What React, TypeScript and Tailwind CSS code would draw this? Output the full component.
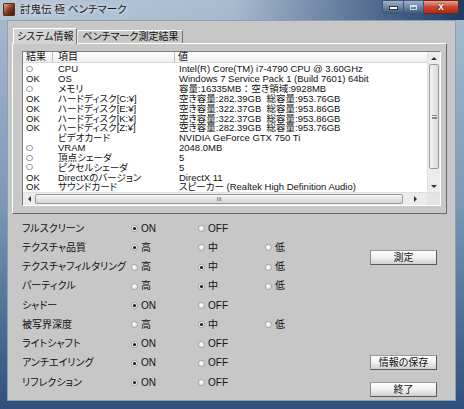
import React from "react";

interface InfoRow {
  result: string;
  item: string;
  value: string;
}

interface SettingRow {
  label: string;
  options: string[];
  selected: number;
}

const infoRows: InfoRow[] = [
  { result: "○", item: "CPU", value: "Intel(R) Core(TM) i7-4790 CPU @ 3.60GHz" },
  { result: "OK", item: "OS", value: "Windows 7 Service Pack 1 (Build 7601) 64bit" },
  { result: "○", item: "メモリ", value: "容量:16335MB ： 空き領域:9928MB" },
  { result: "OK", item: "ハードディスク[C:¥]", value: "空き容量:282.39GB  総容量:953.76GB" },
  { result: "OK", item: "ハードディスク[E:¥]", value: "空き容量:322.37GB  総容量:953.86GB" },
  { result: "OK", item: "ハードディスク[K:¥]", value: "空き容量:322.37GB  総容量:953.86GB" },
  { result: "OK", item: "ハードディスク[Z:¥]", value: "空き容量:282.39GB  総容量:953.76GB" },
  { result: "", item: "ビデオカード", value: "NVIDIA GeForce GTX 750 Ti" },
  { result: "○", item: "VRAM", value: "2048.0MB" },
  { result: "○", item: "頂点シェーダ", value: "5" },
  { result: "○", item: "ピクセルシェーダ", value: "5" },
  { result: "OK", item: "DirectXのバージョン", value: "DirectX 11" },
  { result: "OK", item: "サウンドカード", value: "スピーカー (Realtek High Definition Audio)" },
];

const settings: SettingRow[] = [
  { label: "フルスクリーン", options: ["ON", "OFF"], selected: 0 },
  { label: "テクスチャ品質", options: ["高", "中", "低"], selected: 0 },
  { label: "テクスチャフィルタリング", options: ["高", "中", "低"], selected: 1 },
  { label: "パーティクル", options: ["高", "中", "低"], selected: 1 },
  { label: "シャドー", options: ["ON", "OFF"], selected: 0 },
  { label: "被写界深度", options: ["高", "中", "低"], selected: 1 },
  { label: "ライトシャフト", options: ["ON", "OFF"], selected: 0 },
  { label: "アンチエイリング", options: ["ON", "OFF"], selected: 0 },
  { label: "リフレクション", options: ["ON", "OFF"], selected: 0 },
];

function Radio({ checked, label }: { checked: boolean; label: string }) {
  return (
    <div className="flex items-center gap-[3px]">
      <span className="w-[7px] h-[7px] rounded-full border border-[#a4a4a4] bg-[radial-gradient(circle_at_35%_35%,#ffffff,#dcdcdc)] flex items-center justify-center">
        {checked && <span className="w-[3px] h-[3px] rounded-full bg-[#111]" />}
      </span>
      <span>{label}</span>
    </div>
  );
}

function Btn({ label }: { label: string }) {
  return (
    <div className="w-[67px] h-[15px] border border-[#5a5a5a] border-t-[#9a9a9a] border-l-[#8a8a8a] bg-gradient-to-b from-[#ffffff] via-[#f0f0f0] to-[#d0d0d0] flex items-center justify-center text-[10px] leading-none text-[#111]">
      {label}
    </div>
  );
}

function Arrow({ dir }: { dir: "up" | "down" | "left" | "right" }) {
  const cls = {
    up: "border-l-[3px] border-r-[3px] border-b-[3px] border-l-transparent border-r-transparent border-b-[#333]",
    down: "border-l-[3px] border-r-[3px] border-t-[3px] border-l-transparent border-r-transparent border-t-[#333]",
    left: "border-t-[3px] border-b-[3px] border-r-[3px] border-t-transparent border-b-transparent border-r-[#333]",
    right: "border-t-[3px] border-b-[3px] border-l-[3px] border-t-transparent border-b-transparent border-l-[#333]",
  }[dir];
  return <span className={`w-0 h-0 ${cls}`} />;
}

export default function App() {
  return (
    <div className="w-[464px] h-[409px] flex flex-col bg-gradient-to-b from-[#a9bcd0] via-[#7d97b5] to-[#2f507c] font-['Liberation_Sans','Noto_Sans_CJK_JP',sans-serif] [font-feature-settings:'palt'] text-[#111] overflow-hidden">
      {/* title bar */}
      <div className="h-[20px] flex items-start bg-gradient-to-r from-[#b7c7d8] via-[#9db2c9_55%] to-[#1d3a68] relative">
        <div className="mt-[3px] ml-[3px] w-[12px] h-[13px] rounded-[1px] bg-gradient-to-br from-[#d9b48a] via-[#8a3a22] to-[#3a1a10] border border-[#5a2a18]" />
        <div className="ml-[5px] mt-[3px] text-[10.5px] leading-[13px] text-[#1a1a1a] [text-shadow:0_0_4px_#ffffff]">
          討鬼伝 極 ベンチマーク
        </div>
        <div className="ml-auto mr-[5px] flex h-[14px]">
          <div className="w-[22px] h-full rounded-bl-[3px] border border-[#3d5578] bg-gradient-to-b from-[#9fb2c8] via-[#6e87a6] to-[#3e5a80] flex items-end justify-center pb-[3px]">
            <span className="w-[7px] h-[2px] bg-white border border-[#333] box-content" />
          </div>
          <div className="w-[20px] h-full border-y border-r border-[#3d5578] bg-gradient-to-b from-[#9fb2c8] via-[#6e87a6] to-[#3e5a80] flex items-center justify-center">
            <span className="w-[7px] h-[5px] border border-white border-t-2 opacity-70" />
          </div>
          <div className="w-[35px] h-full rounded-br-[3px] border-y border-r border-[#6a2318] bg-gradient-to-b from-[#e8a393] via-[#c9452e] to-[#b32a16] flex items-center justify-center text-white text-[10px] font-bold leading-none [text-shadow:0_0_2px_#000]">
            x
          </div>
        </div>
      </div>

      {/* client area */}
      <div className="ml-[7px] mr-[8px] mb-[8px] flex-1 bg-[#c7c7c7] flex flex-col border border-[#8e9fb4]">
        {/* tabs */}
        <div className="flex items-end ml-[5px] mt-[6px] h-[16px] text-[10px] leading-none">
          <div className="h-[16px] px-[3px] flex items-center bg-[#d4d4d4] border border-b-0 border-t-white border-l-white border-r-[#707070] relative z-10 -mb-px">
            システム情報
          </div>
          <div className="h-[13px] px-[4px] flex items-center bg-[#c9c9c9] border border-b-0 border-t-white border-l-[#eeeeee] border-r-[#707070]">
            ベンチマーク測定結果
          </div>
        </div>

        {/* tab panel */}
        <div className="ml-[4px] w-[435px] h-[171px] border border-t-white border-l-white border-r-[#6a6a6a] border-b-[#6a6a6a] bg-[#c8c8c8] pt-[7px] pl-[9px]">
          <div className="w-[419px] h-[155px] border border-t-[#7c7c7c] border-l-[#7c7c7c] border-r-white border-b-white bg-white flex flex-col">
            <div className="flex flex-1 min-h-0">
              <div className="flex-1 flex flex-col min-w-0 text-[9.5px]">
                {/* header */}
                <div className="h-[12px] flex items-center bg-gradient-to-b from-white to-[#f0f0f0] border-b border-[#d8d8d8] leading-none text-[10px]">
                  <div className="w-[30px] pl-[3px] border-r border-[#bdbdbd] h-full flex items-center">結果</div>
                  <div className="w-[122px] pl-[5px] border-r border-[#bdbdbd] h-full flex items-center">項目</div>
                  <div className="pl-[3px]">値</div>
                </div>
                <div className="pt-[1px]">
                  {infoRows.map((r, i) => (
                    <div key={i} className="h-[9.83px] flex items-center leading-none whitespace-nowrap">
                      <div className="w-[30px] pl-[3px] h-full flex items-center">
                        {r.result === "○" ? (
                          <span className="text-[8px] leading-none font-['DejaVu_Sans',sans-serif]">○</span>
                        ) : (
                          r.result
                        )}
                      </div>
                      <div className="w-[122px] pl-[5px]">{r.item}</div>
                      <div className="pl-[4px] whitespace-pre">{r.value}</div>
                    </div>
                  ))}
                </div>
              </div>
              {/* vertical scrollbar */}
              <div className="w-[13px] bg-[#ececec] border-l border-[#e0e0e0] flex flex-col items-center">
                <div className="h-[12px] flex items-center justify-center">
                  <Arrow dir="up" />
                </div>
                <div className="w-[10px] h-[105px] rounded-[2px] border border-[#9a9a9a] bg-gradient-to-r from-[#f4f4f4] to-[#dadada] flex items-center justify-center">
                  <span className="w-[5px] h-[4px] border-y border-[#8a8a8a] relative after:content-[''] after:absolute after:left-0 after:right-0 after:top-[1px] after:h-px after:bg-[#8a8a8a]" />
                </div>
                <div className="flex-1" />
                <div className="h-[12px] flex items-center justify-center">
                  <Arrow dir="down" />
                </div>
              </div>
            </div>
            {/* horizontal scrollbar */}
            <div className="h-[13px] flex bg-[#ececec] border-t border-[#e0e0e0]">
              <div className="w-[12px] flex items-center justify-center">
                <Arrow dir="left" />
              </div>
              <div className="w-[368px] my-[1px] rounded-[2px] border border-[#9a9a9a] bg-gradient-to-b from-[#f4f4f4] to-[#d6d6d6] flex items-center justify-center text-[6px] leading-none text-[#555]">
                III
              </div>
              <div className="flex-1 flex items-center justify-center">
                <Arrow dir="right" />
              </div>
              <div className="w-[13px] bg-[#e4e4e4]" />
            </div>
          </div>
        </div>

        {/* settings */}
        <div className="flex mt-[5px] ml-[14px] text-[10px] leading-none">
          <div className="w-[348px]">
            {settings.map((s, i) => (
              <div key={i} className="h-[19.25px] grid grid-cols-[109px_67px_67px_1fr] items-center">
                <div>{s.label}</div>
                {s.options.map((o, j) => (
                  <Radio key={j} label={o} checked={j === s.selected} />
                ))}
              </div>
            ))}
          </div>
          <div className="flex flex-col pt-[31px]">
            <Btn label="測定" />
            <div className="h-[90px]" />
            <Btn label="情報の保存" />
            <div className="h-[12px]" />
            <Btn label="終了" />
          </div>
        </div>
      </div>
    </div>
  );
}
